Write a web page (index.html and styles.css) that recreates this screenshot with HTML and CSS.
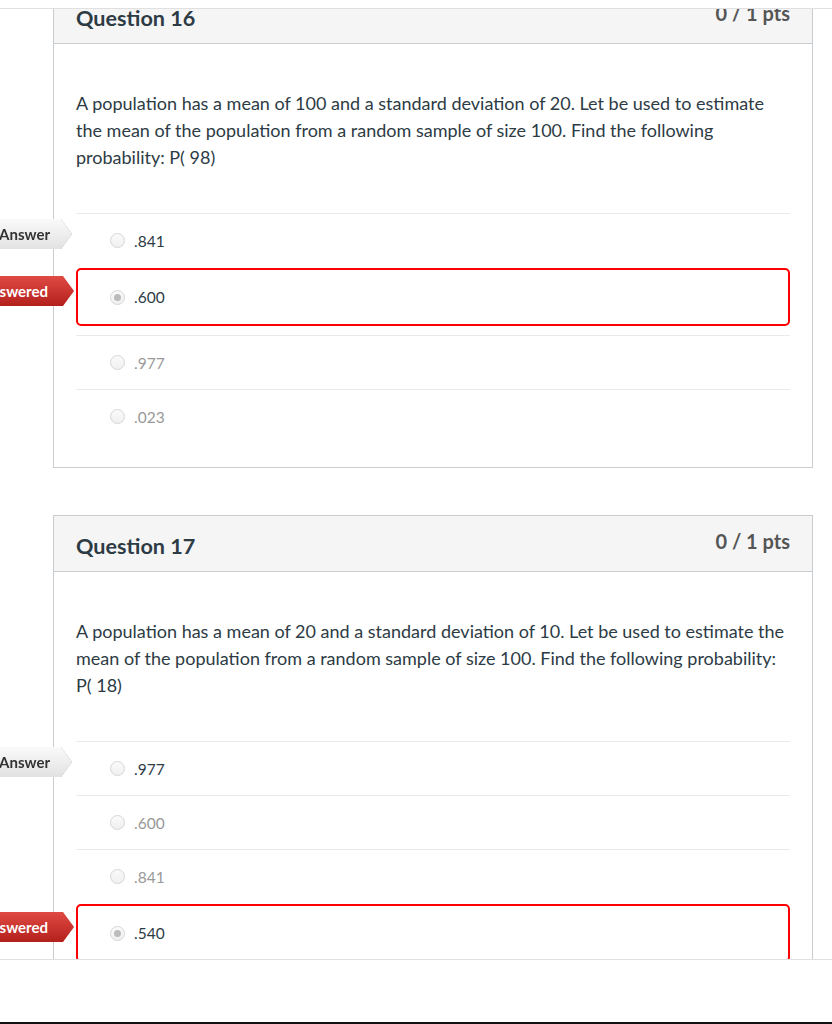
FILE: index.html
```html
<!DOCTYPE html>
<html>

<head>
    <meta http-equiv="Content-Type" content="text/html; charset=utf-8">
    <title>Quiz Results</title>
    <link rel="stylesheet" href="styles.css">
</head>

<body>
    <div class="viewport">
        <div class="questions">

            <div class="question">
                <div class="header">
                    <span class="name">Question 16</span>
                    <span class="pts">0 / 1 pts</span>
                </div>
                <div class="text">
                    A population has a mean of 100 and a standard deviation of 20. Let be used to estimate
                    the mean of the population from a random sample of size 100. Find the following
                    probability: P( 98)
                </div>
                <div class="answers">
                    <div class="answer correct">
                        <div class="tag-wrap tag-correct"><div class="tag">Correct Answer</div></div>
                        <span class="radio"></span>
                        <span class="label">.841</span>
                    </div>
                    <div class="answer selected">
                        <div class="tag-wrap tag-wrong"><div class="tag">You Answered</div></div>
                        <span class="radio checked"></span>
                        <span class="label">.600</span>
                    </div>
                    <div class="answer faded">
                        <span class="radio"></span>
                        <span class="label">.977</span>
                    </div>
                    <div class="answer faded">
                        <span class="radio"></span>
                        <span class="label">.023</span>
                    </div>
                </div>
            </div>

            <div class="question">
                <div class="header">
                    <span class="name">Question 17</span>
                    <span class="pts">0 / 1 pts</span>
                </div>
                <div class="text">
                    A population has a mean of 20 and a standard deviation of 10. Let be used to estimate the
                    mean of the population from a random sample of size 100. Find the following probability:
                    P( 18)
                </div>
                <div class="answers">
                    <div class="answer correct">
                        <div class="tag-wrap tag-correct"><div class="tag">Correct Answer</div></div>
                        <span class="radio"></span>
                        <span class="label">.977</span>
                    </div>
                    <div class="answer faded">
                        <span class="radio"></span>
                        <span class="label">.600</span>
                    </div>
                    <div class="answer faded">
                        <span class="radio"></span>
                        <span class="label">.841</span>
                    </div>
                    <div class="answer selected">
                        <div class="tag-wrap tag-wrong"><div class="tag">You Answered</div></div>
                        <span class="radio checked"></span>
                        <span class="label">.540</span>
                    </div>
                </div>
            </div>

        </div>
    </div>
    <div class="spacer"></div>
    <div class="taskbar"></div>
</body>
</html>
```

FILE: styles.css
```css
html {
    overflow: hidden;
}

body {
    margin: 0;
    padding-top: 8px;
    font: 18px Lato, "Liberation Sans", sans-serif;
    color: #2d3b45;
    background: #fff;
}

.viewport {
    height: 950px;
    overflow: hidden;
    border-top: 1px solid #e0e0e0;
    border-bottom: 1px solid #e0e0e0;
}

.questions {
    margin-top: -22px;
    padding-left: 53px;
    width: 760px;
}

.question {
    border: 1px solid #c7cdd1;
    margin-bottom: 47px;
}

.header {
    display: flex;
    justify-content: space-between;
    align-items: flex-start;
    height: 41px;
    padding: 14px 22px 0;
    background: #f5f5f5;
    border-bottom: 1px solid #c7cdd1;
}

.name {
    font-size: 21.6px;
    font-weight: 700;
    line-height: 32px;
    color: #2d3b45;
}

.pts {
    font-size: 20px;
    font-weight: 700;
    line-height: 22px;
    color: #555;
}

.text {
    padding: 46px 22px 0;
    line-height: 27px;
}

.answers {
    margin: 42px 22px 0;
    padding-bottom: 24px;
}

.answer {
    position: relative;
    display: flex;
    align-items: center;
    height: 53px;
    border-top: 1px solid #eaeaea;
    font-size: 15.5px;
}

.answer .radio {
    margin-left: 34px;
}

.answer .label {
    margin-left: 9px;
}

.answer.faded .label {
    color: #999;
}

.answer.selected {
    height: 54px;
    margin: 1px 0 9px;
    border: 2px solid #f00;
    border-radius: 5px;
}

.answer.selected .radio {
    margin-left: 32px;
}

.radio {
    width: 13px;
    height: 13px;
    border: 1px solid #d6d6d6;
    border-radius: 50%;
    background: linear-gradient(#fafafa, #f0f0f0);
    flex: none;
    position: relative;
}

.radio.checked::after {
    content: "";
    position: absolute;
    left: 3px;
    top: 3px;
    width: 7px;
    height: 7px;
    border-radius: 50%;
    background: #bbb;
}

/* answer arrows sit over the left edge of the card */
.tag-wrap {
    position: absolute;
    right: calc(100% + 4px);
    top: 5px;
    filter: drop-shadow(0 0 0.6px #999);
}

.tag {
    height: 30px;
    line-height: 30px;
    padding: 0 22px 0 10px;
    font-size: 15px;
    font-weight: 700;
    white-space: nowrap;
    clip-path: polygon(0 0, calc(100% - 11px) 0, 100% 50%, calc(100% - 11px) 100%, 0 100%);
}

.tag-correct .tag {
    background: linear-gradient(#fafafa, #e2e2e2);
    color: #333;
}

.tag-wrong {
    top: 6px;
    filter: none;
}

.tag-wrong .tag {
    padding-right: 26px;
    background: linear-gradient(#e04a44, #b3201c);
    color: #fff;
}

.spacer {
    height: 62px;
}

.taskbar {
    height: 2px;
    background: #111;
}
```
